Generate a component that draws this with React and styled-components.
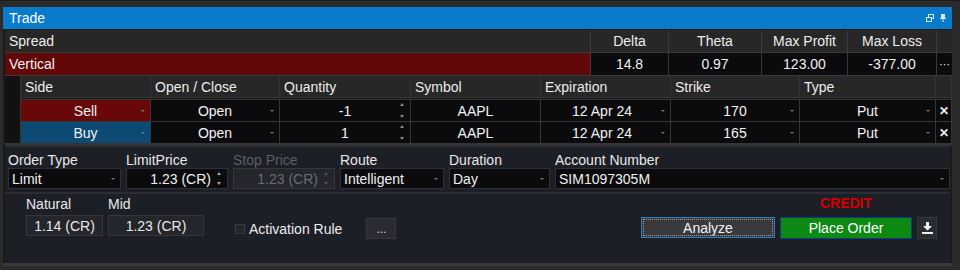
import React from "react";
import styled, { createGlobalStyle } from "styled-components";

const Global = createGlobalStyle`
  html, body {
    margin: 0;
    padding: 0;
    background: #2b2b2b;
  }
  body {
    font-family: "Liberation Sans", Arial, sans-serif;
    color: #e6e6e6;
  }
`;

const Page = styled.div`
  width: 960px;
  height: 270px;
  box-sizing: border-box;
  padding: 6px 0 0 3px;
  background: #2b2b2b;
  border-top: 1px solid #1a1a1a;
`;

const Window = styled.div`
  width: 949px;
  height: 259px;
  display: flex;
  flex-direction: column;
  background: #1d1f27;
  border-bottom: 3px solid #3a3a3a;
  box-sizing: border-box;
`;

const TitleBar = styled.div`
  height: 22px;
  flex: none;
  background: #0a7acb;
  display: flex;
  align-items: center;
  justify-content: space-between;
  padding: 0 6px 0 6px;
  font-size: 14px;
  color: #fff;
`;

const TitleIcons = styled.div`
  display: flex;
  gap: 6px;
  align-items: center;
`;

const Body = styled.div`
  flex: 1;
  display: flex;
  flex-direction: column;
  padding: 1px 0 0 2px;
  background: #1a1a1a;
`;

const SummaryGrid = styled.div`
  display: grid;
  grid-template-columns: 585px 77px 92px 85px 88px 15px;
  grid-auto-rows: 22px;
  gap: 1px;
  background: #3a3a3a;
  padding-bottom: 1px;
`;

const HeadCell = styled.div`
  background: #272727;
  display: flex;
  align-items: center;
  justify-content: ${(p) => (p.$left ? "flex-start" : "center")};
  padding: 0 4px;
  font-size: 14px;
  color: #ececec;
  white-space: nowrap;
`;

const ValueCell = styled.div`
  background: ${(p) => p.$bg || "#0b0b0e"};
  display: flex;
  align-items: center;
  justify-content: ${(p) => (p.$left ? "flex-start" : "center")};
  padding: 0 4px;
  font-size: 14px;
  color: #f0f0f0;
  white-space: nowrap;
  position: relative;
`;

const LegGrid = styled.div`
  display: grid;
  grid-template-columns: 15px 129px 128px 130px 129px 129px 128px 135px 15px;
  grid-template-rows: 21px 1px 21px 21px;
  column-gap: 1px;
  row-gap: 1px;
  background: #353535;
  padding-bottom: 2px;
`;

const Gutter = styled.div`
  background: #111;
  grid-row: 1 / span 4;
`;

const Spacer = styled.div`
  grid-column: 2 / span 8;
  background: #1a1a1a;
`;

const LegHead = styled.div`
  background: #272727;
  display: flex;
  align-items: center;
  padding: 0 4px;
  font-size: 14px;
  color: #ececec;
`;

const LegCell = styled.div`
  background: ${(p) => p.$bg || "#0b0b0e"};
  display: flex;
  align-items: center;
  justify-content: ${(p) => (p.$align === "right" ? "flex-end" : "center")};
  padding: 0 ${(p) => (p.$align === "right" ? "38px" : "4px")} 0 4px;
  font-size: 14px;
  color: #f2f2f2;
  position: relative;
`;

const Caret = styled.span`
  position: absolute;
  right: 5px;
  top: 50%;
  margin-top: -1px;
  width: 0;
  height: 0;
  border-left: 2px solid transparent;
  border-right: 2px solid transparent;
  border-top: 2px solid #777;
`;

const Spin = styled.span`
  position: absolute;
  right: 6px;
  top: 3px;
  bottom: 3px;
  display: flex;
  flex-direction: column;
  justify-content: space-between;
  &::before,
  &::after {
    content: "";
    width: 0;
    height: 0;
    border-left: 2px solid transparent;
    border-right: 2px solid transparent;
  }
  &::before {
    border-bottom: 3px solid ${(p) => p.$color || "#888"};
  }
  &::after {
    border-top: 3px solid ${(p) => p.$color || "#888"};
  }
`;

const CloseCell = styled.div`
  background: #0b0b0e;
  display: flex;
  align-items: center;
  justify-content: center;
  font-size: 12px;
  font-weight: bold;
  color: #f0f0f0;
`;

const Form = styled.div`
  flex: 1;
  display: flex;
  flex-direction: column;
  background: #1d1f27;
  border-top: 2px solid #2b2d33;
  margin-right: 2px;
`;

const FieldRow = styled.div`
  display: flex;
  gap: 5px;
  padding: 5px 0 3px 3px;
  border-bottom: 2px solid #2b2d33;
`;

const Field = styled.div`
  display: flex;
  flex-direction: column;
  width: ${(p) => p.$w}px;
`;

const Label = styled.div`
  font-size: 14px;
  line-height: 16px;
  color: ${(p) => (p.$disabled ? "#5c5e64" : "#e8e8e8")};
  white-space: nowrap;
`;

const Box = styled.div`
  height: 21px;
  box-sizing: border-box;
  border: 1px solid ${(p) => (p.$disabled ? "#35373d" : "#2e3036")};
  background: ${(p) => (p.$disabled ? "#24262c" : "#0b0b0e")};
  color: ${(p) => (p.$disabled ? "#6a6c72" : "#f0f0f0")};
  font-size: 14px;
  display: flex;
  align-items: center;
  justify-content: ${(p) => (p.$right ? "flex-end" : "flex-start")};
  padding: 0 ${(p) => (p.$right ? "16px" : "4px")} 0 3px;
  position: relative;
  white-space: nowrap;
`;

const Lower = styled.div`
  flex: 1;
  display: flex;
  align-items: flex-start;
  padding: 2px 0 0 21px;
`;

const ReadField = styled.div`
  display: flex;
  flex-direction: column;
  margin-right: 5px;
`;

const ReadBox = styled.div`
  width: ${(p) => p.$w}px;
  height: 21px;
  box-sizing: border-box;
  margin-top: 3px;
  background: #24262b;
  border: 1px solid #34363c;
  font-size: 14px;
  color: #e8e8e8;
  display: flex;
  align-items: center;
  justify-content: center;
`;

const Activation = styled.label`
  display: flex;
  align-items: center;
  gap: 4px;
  margin: 25px 0 0 26px;
  font-size: 14px;
  color: #ececec;
`;

const Check = styled.span`
  width: 8px;
  height: 8px;
  border: 1px solid #3a3c42;
  background: #24262b;
`;

const Ellipsis = styled.button`
  width: 30px;
  height: 21px;
  margin: 22px 0 0 24px;
  background: #2a2c31;
  border: 1px solid #36383e;
  color: #d0d0d0;
  font-size: 12px;
  font-family: inherit;
  padding: 0;
`;

const Actions = styled.div`
  margin-left: auto;
  display: flex;
  align-items: flex-end;
  gap: 5px;
  margin-top: -1px;
  margin-right: 13px;
`;

const Analyze = styled.button`
  width: 134px;
  height: 21px;
  box-sizing: border-box;
  margin-bottom: 1px;
  background: #3a3a3d;
  border: 1px solid #2f7fc0;
  outline: 1px dotted #9a9a9a;
  outline-offset: -3px;
  color: #f2f2f2;
  font-family: inherit;
  font-size: 14px;
  padding: 0;
`;

const OrderCol = styled.div`
  display: flex;
  flex-direction: column;
  align-items: center;
`;

const Credit = styled.div`
  color: #d40000;
  font-size: 14px;
  font-weight: bold;
  line-height: 16px;
  margin-bottom: 6px;
`;

const PlaceOrder = styled.button`
  width: 132px;
  height: 22px;
  box-sizing: border-box;
  background: #0c8a14;
  border: 1px solid #0a3a8a;
  color: #ffffff;
  font-family: inherit;
  font-size: 14px;
  padding: 0;
`;

const IconBtn = styled.button`
  width: 20px;
  height: 22px;
  box-sizing: border-box;
  background: #2a2c31;
  border: 1px solid #36383e;
  padding: 0;
  display: flex;
  align-items: center;
  justify-content: center;
`;

const summary = [
  { label: "Delta", value: "14.8" },
  { label: "Theta", value: "0.97" },
  { label: "Max Profit", value: "123.00" },
  { label: "Max Loss", value: "-377.00" },
];

const legs = [
  { side: "Sell", color: "#680808", qty: "-1", strike: "170" },
  { side: "Buy", color: "#0c4a74", qty: "1", strike: "165" },
];

const legHeads = ["Side", "Open / Close", "Quantity", "Symbol", "Expiration", "Strike", "Type"];

export default function App() {
  return (
    <>
      <Global />
      <Page>
        <Window>
          <TitleBar>
            <span>Trade</span>
            <TitleIcons>
              <svg width="8" height="8" viewBox="0 0 8 8">
                <rect x="2.5" y="0.5" width="5" height="4" fill="none" stroke="#d8eaf8" />
                <rect x="0.5" y="3.5" width="5" height="4" fill="#0a7acb" stroke="#d8eaf8" />
              </svg>
              <svg width="6" height="8" viewBox="0 0 6 8">
                <rect x="1" y="0" width="4" height="5" fill="#d8eaf8" />
                <rect x="0" y="4" width="6" height="1" fill="#d8eaf8" />
                <rect x="2.5" y="5" width="1" height="3" fill="#d8eaf8" />
              </svg>
            </TitleIcons>
          </TitleBar>
          <Body>
            <SummaryGrid>
              <HeadCell $left>Spread</HeadCell>
              {summary.map((s) => (
                <HeadCell key={s.label}>{s.label}</HeadCell>
              ))}
              <HeadCell />
              <ValueCell $left $bg="#620808">Vertical</ValueCell>
              {summary.map((s) => (
                <ValueCell key={s.label}>{s.value}</ValueCell>
              ))}
              <ValueCell style={{ padding: 0, fontSize: 11 }}>···</ValueCell>
            </SummaryGrid>
            <LegGrid>
              <Gutter />
              {legHeads.map((h) => (
                <LegHead key={h}>{h}</LegHead>
              ))}
              <LegHead />
              <Spacer />
              {legs.map((l) => (
                <React.Fragment key={l.side}>
                  <LegCell $bg={l.color}>
                    {l.side}
                    <Caret />
                  </LegCell>
                  <LegCell>
                    Open
                    <Caret />
                  </LegCell>
                  <LegCell>
                    {l.qty}
                    <Spin />
                  </LegCell>
                  <LegCell>AAPL</LegCell>
                  <LegCell $align="right">
                    12 Apr 24
                    <Caret />
                  </LegCell>
                  <LegCell>
                    {l.strike}
                    <Caret />
                  </LegCell>
                  <LegCell>
                    Put
                    <Caret />
                  </LegCell>
                  <CloseCell>✕</CloseCell>
                </React.Fragment>
              ))}
            </LegGrid>
            <Form>
              <FieldRow>
                <Field $w={113}>
                  <Label>Order Type</Label>
                  <Box>
                    Limit
                    <Caret />
                  </Box>
                </Field>
                <Field $w={102}>
                  <Label>LimitPrice</Label>
                  <Box $right>
                    1.23 (CR)
                    <Spin $color="#aaa" />
                  </Box>
                </Field>
                <Field $w={102}>
                  <Label $disabled>Stop Price</Label>
                  <Box $right $disabled>
                    1.23 (CR)
                    <Spin $color="#555" />
                  </Box>
                </Field>
                <Field $w={104}>
                  <Label>Route</Label>
                  <Box>
                    Intelligent
                    <Caret />
                  </Box>
                </Field>
                <Field $w={101}>
                  <Label>Duration</Label>
                  <Box>
                    Day
                    <Caret />
                  </Box>
                </Field>
                <Field $w={395}>
                  <Label>Account Number</Label>
                  <Box>
                    SIM1097305M
                    <Caret />
                  </Box>
                </Field>
              </FieldRow>
              <Lower>
                <ReadField>
                  <Label>Natural</Label>
                  <ReadBox $w={77}>1.14 (CR)</ReadBox>
                </ReadField>
                <ReadField>
                  <Label>Mid</Label>
                  <ReadBox $w={96}>1.23 (CR)</ReadBox>
                </ReadField>
                <Activation>
                  <Check />
                  Activation Rule
                </Activation>
                <Ellipsis>...</Ellipsis>
                <Actions>
                  <Analyze>Analyze</Analyze>
                  <OrderCol>
                    <Credit>CREDIT</Credit>
                    <PlaceOrder>Place Order</PlaceOrder>
                  </OrderCol>
                  <IconBtn>
                    <svg width="11" height="12" viewBox="0 0 11 12">
                      <path d="M4 0h3v4h3L5.5 8.5 1 4h3z" fill="#f0f0f0" />
                      <rect x="0" y="10" width="11" height="2" fill="#f0f0f0" />
                    </svg>
                  </IconBtn>
                </Actions>
              </Lower>
            </Form>
          </Body>
        </Window>
      </Page>
    </>
  );
}
